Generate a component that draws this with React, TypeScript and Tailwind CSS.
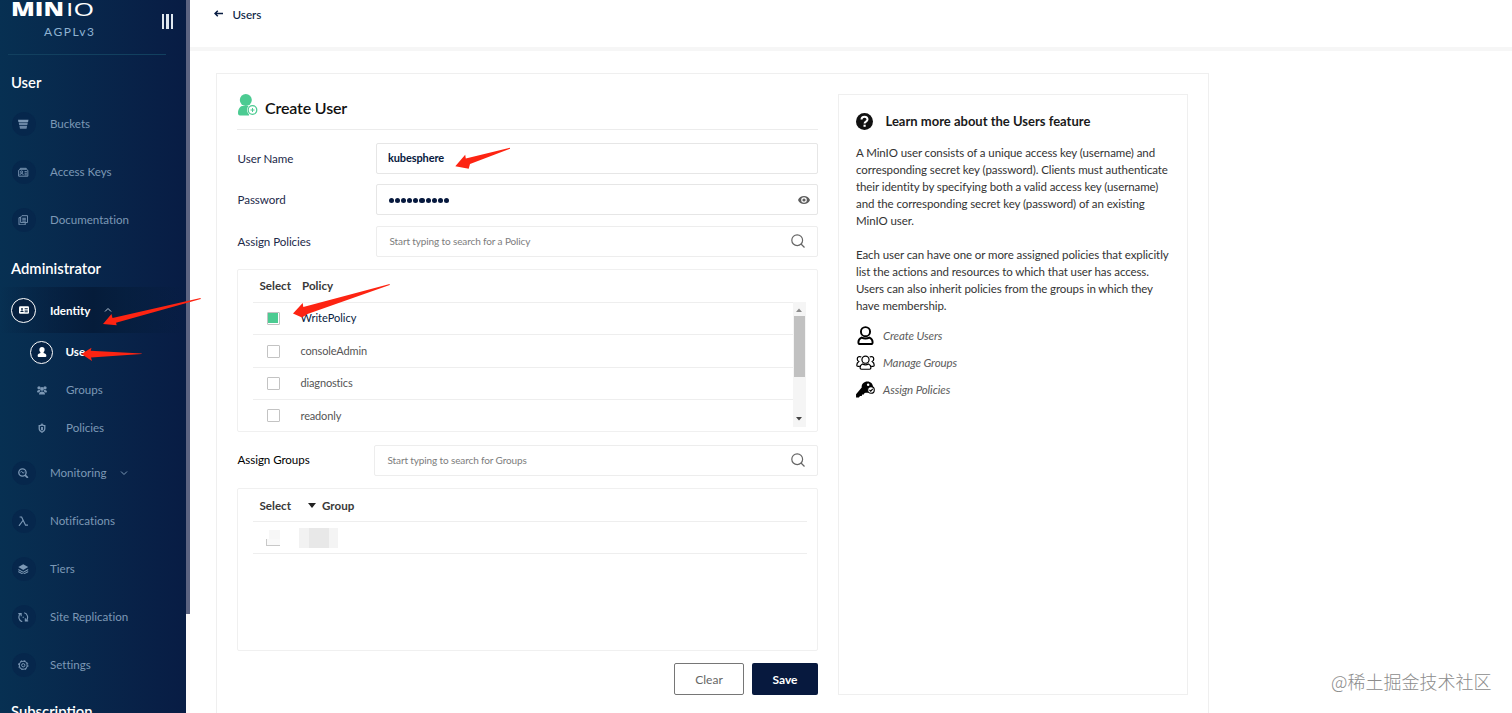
import type { ReactNode } from "react";

const icons: Record<string, ReactNode> = {
  buckets: (
    <>
      <path d="M0 1h16l-.6 3.400H.6z" />
      <path d="M1.100 5.500h13.800l-.6 3.500H1.700zM2.100 10.300h11.800L13 15H3z" opacity=".85" />
    </>
  ),
  keys: (
    <g fill="none" stroke="currentColor" strokeWidth="1.400">
      <path d="M3.500 3.500V2h9v1.500M1 14V5l2-1.500h10L15 5v9z" />
      <circle cx="5.500" cy="7.500" r="1.600" />
      <path d="M3 12c0-3 5-3 5 0M10 7h3.500M10 9.500h3.500M10 12h3.500" />
    </g>
  ),
  docs: (
    <g fill="none" stroke="currentColor" strokeWidth="1.400">
      <path d="M6 1h8.500v10.500H4V3zM4 4H1.500v11H11v-3.500M6.500 5h5.500M6.500 7.200h5.500M6.500 9.400h5.500" />
    </g>
  ),
  identity: (
    <>
      <rect x="0" y="2" width="16" height="12" rx="2" />
      <g fill="#06203f">
        <circle cx="4.800" cy="6.300" r="1.500" />
        <path d="M2 11.300c0-3.500 5.600-3.500 5.600 0zM9 5h5v1.400H9zM9 7.500h5v1.400H9zM9 10h5v1.400H9z" />
      </g>
    </>
  ),
  user: (
    <>
      <circle cx="8" cy="4.300" r="4.200" />
      <path d="M5.500 7.500h5v2.200c3 .6 4.500 2 4.500 4.500 0 1-.6 1.600-1.600 1.600H2.600c-1 0-1.600-.6-1.600-1.600 0-2.500 1.500-3.900 4.500-4.500z" />
    </>
  ),
  groups: (
    <>
      <circle cx="3.200" cy="4.500" r="2.600" />
      <circle cx="12.800" cy="4.500" r="2.600" />
      <circle cx="8" cy="6.200" r="3" />
      <path d="M0 11.500c0-3.500 3-4.500 5-3 0 2-1 3-2 3.500zM16 11.500c0-3.500-3-4.500-5-3 0 2 1 3 2 3.500zM3.200 15c0-6 9.600-6 9.600 0z" />
    </>
  ),
  policies: (
    <>
      <path
        fillRule="evenodd"
        d="M8 0l1.500 2.200C11 3 12.500 3.200 13.500 3.200v6c0 3-2.500 5-5.500 6.600C5 14.200 2.500 12.200 2.500 9.200v-6c1 0 2.500-.2 4-1zM8 4.200L4.600 5.300v4c0 1.800 1.400 3 3.400 4.100 2-1.100 3.400-2.300 3.400-4.100v-4z"
      />
      <path d="M6.500 6.500h3v5h-3z" />
    </>
  ),
  monitoring: (
    <g fill="none" stroke="currentColor" strokeWidth="2">
      <circle cx="6.800" cy="6.800" r="5.600" />
      <path d="M10.800 10.800L15 15" strokeWidth="2.600" />
      <path d="M3.500 6.500l2.200-1.500L7.500 8 10 6" strokeWidth="1.300" />
    </g>
  ),
  lambda: (
    <path d="M2.500 1.500h3L11.500 14h3.700M7.800 6.500L1.500 15" fill="none" stroke="currentColor" strokeWidth="1.800" />
  ),
  tiers: (
    <>
      <path d="M8 .5L15.500 4.700 8 9 .5 4.700z" />
      <path d="M.5 7.500L8 11.700l7.500-4.200v1.900L8 13.400.5 9.400zM.5 10.800L8 14.800l7.500-4v1.700L8 16.300.5 12.500z" />
    </>
  ),
  replication: (
    <g fill="none" stroke="currentColor" strokeWidth="1.700">
      <path d="M6.500 14.800A7 7 0 0 1 3.500 3M4.800 6.500V2.500H.5M9.500 1.200a7 7 0 0 1 3 11.800M11.200 9.500v4h4.300" />
      <path d="M7 8h2" />
    </g>
  ),
  settings: (
    <g fill="none" stroke="currentColor">
      <circle cx="8" cy="8" r="6" strokeWidth="1.600" />
      <circle cx="8" cy="8" r="7.200" strokeWidth="1.400" strokeDasharray="2.800 2.850" />
      <circle cx="8" cy="8" r="2.500" strokeWidth="1.500" />
    </g>
  ),
};

function Icon({ name, className }: { name: string; className: string }) {
  return (
    <svg viewBox="0 0 16 16" fill="currentColor" className={className}>
      {icons[name]}
    </svg>
  );
}

function NavItem({ icon, label, arrow }: { icon: string; label: string; arrow?: boolean }) {
  return (
    <div className="flex h-12 items-center pl-[11.500px] text-[#7c98b5]">
      <div className="flex size-6 items-center justify-center rounded-full bg-[#06274c]">
        <Icon name={icon} className="size-[10.500px]" />
      </div>
      <span className="ml-[14.500px] text-[11.600px] tracking-[-0.020px]">{label}</span>
      {arrow && (
        <svg viewBox="0 0 8 8" className="ml-[14px] size-[8px]" fill="none" stroke="currentColor">
          <path d="M1 2.500l3 3 3-3" />
        </svg>
      )}
    </div>
  );
}

function SubItem({ icon, label }: { icon: string; label: string }) {
  return (
    <div className="flex h-[38px] items-center pl-[30px] text-[#7c98b5]">
      <div className="flex w-[23px] justify-center">
        <Icon name={icon} className="size-[10px]" />
      </div>
      <span className="ml-[13px] text-[11.600px] tracking-[-0.020px]">{label}</span>
    </div>
  );
}

function Sidebar() {
  return (
    <aside className="flex w-[190px] shrink-0">
      <div className="w-[186px] bg-linear-to-r from-[#073052] to-[#081c44]">
        <div className="ml-[8px] flex h-[55px] w-[158px] justify-between border-b border-[#12405f]">
          <svg width="90" height="40" viewBox="0 0 90 40" fill="#fff" className="font-['Open_Sans',sans-serif]">
            <text x="3" y="15.800" fontSize="19" fontWeight="800" textLength="53" lengthAdjust="spacingAndGlyphs">
              MIN
            </text>
            <text x="58" y="15.800" fontSize="19" fontWeight="400" textLength="28" lengthAdjust="spacingAndGlyphs">
              IO
            </text>
            <text x="36" y="35.500" fontSize="12" fill="#8fb3d2" textLength="50" className="font-[Lato,sans-serif]">
              AGPLv3
            </text>
          </svg>
          <div className="mt-[14px] mr-[-7px] flex h-[15px] gap-[2px]">
            <i className="w-[2.400px] bg-[#dfe7ef]" />
            <i className="w-[2.400px] bg-[#dfe7ef]" />
            <i className="w-[2.400px] bg-[#dfe7ef]" />
          </div>
        </div>

        <div className="mt-[9px] flex h-[36px] items-center pl-[11px] text-[14.800px] font-semibold text-white">User</div>
        <NavItem icon="buckets" label="Buckets" />
        <NavItem icon="keys" label="Access Keys" />
        <NavItem icon="docs" label="Documentation" />

        <div className="flex h-[43px] items-center pt-[5px] pl-[11px] text-[14.800px] font-semibold text-white">
          Administrator
        </div>
        <div className="flex h-[46px] items-center bg-linear-to-r from-transparent via-[#051c3a] via-50% to-transparent pl-[11px] text-white">
          <div className="flex size-[25px] items-center justify-center rounded-full border border-white bg-[#06203f]">
            <Icon name="identity" className="size-[10px]" />
          </div>
          <span className="mt-px ml-[14px] text-[11.600px] font-bold">Identity</span>
          <svg viewBox="0 0 8 8" className="ml-[14px] size-[8px]" fill="none" stroke="#b7c6d6">
            <path d="M1 5.500l3-3 3 3" />
          </svg>
        </div>
        <div className="flex h-[38px] items-center pl-[30px] text-white">
          <div className="flex size-[23px] items-center justify-center rounded-full border border-white bg-[#062345]">
            <Icon name="user" className="size-[10px]" />
          </div>
          <span className="ml-[12.500px] text-[11.600px] font-bold">
            Use<span className="text-transparent">rs</span>
          </span>
        </div>
        <SubItem icon="groups" label="Groups" />
        <SubItem icon="policies" label="Policies" />
        <div className="h-[2px]" />
        <NavItem icon="monitoring" label="Monitoring" arrow />
        <NavItem icon="lambda" label="Notifications" />
        <NavItem icon="tiers" label="Tiers" />
        <NavItem icon="replication" label="Site Replication" />
        <NavItem icon="settings" label="Settings" />
        <div className="flex h-[44px] items-center pt-px pl-[11px] text-[14.800px] font-semibold text-white">
          Subscription
        </div>
      </div>
      <div className="w-[4px] bg-[#fbf8f9]">
        <div className="h-[614px] bg-[#5c6381]" />
      </div>
    </aside>
  );
}

function SearchIcon() {
  return (
    <svg viewBox="0 0 14 14" className="size-[14px]" fill="none" stroke="#666" strokeWidth="1.200">
      <circle cx="6.200" cy="6.200" r="5.400" />
      <path d="M10 10l3.500 3.500" />
    </svg>
  );
}

function SearchBox({ placeholder, className }: { placeholder: string; className: string }) {
  return (
    <div
      className={`flex items-center justify-between rounded-[2px] border border-[#ededed] pr-[12px] pb-px pl-[12.500px] text-[10px] tracking-[-0.120px] text-[#7d7d7d] ${className}`}
    >
      <span>{placeholder}</span>
      <SearchIcon />
    </div>
  );
}

const policies = ["WritePolicy", "consoleAdmin", "diagnostics", "readonly"];

function PolicyTable() {
  return (
    <div className="mt-[12px] h-[163px] overflow-hidden rounded-[2px] border border-[#f0f0f0] pr-[11.500px] pl-[15px]">
      <div className="flex h-[32px] items-center pl-[6.500px] text-[11.600px] font-bold text-[#393939]">
        <span className="w-[42.500px]">Select</span>
        <span>Policy</span>
      </div>
      <div className="flex">
        <div className="flex-1">
          {policies.map((policy, index) => (
            <div
              key={policy}
              className={`flex h-[32.400px] items-center border-t border-[#eeeeee] pl-[13.500px] text-[11px] ${
                index === 0 ? "pb-px text-[#081c42]" : "tracking-[-0.150px] text-[#555]"
              }`}
            >
              <div className="mr-[21px] flex size-[13px] items-center justify-center rounded-[1px] border border-[#c3c3c3]">
                {index === 0 && <div className="size-[10px] bg-[#4ccb92]" />}
              </div>
              {policy}
            </div>
          ))}
        </div>
        <div className="flex h-[125px] w-[13px] flex-col items-center justify-between bg-[#f5f5f5]">
          <svg viewBox="0 0 6 4" className="mt-[6px] h-[4px] w-[6px]" fill="#8d8d8d">
            <path d="M0 4l3-3.500L6 4z" />
          </svg>
          <div className="mt-[4px] mb-auto h-[61px] w-[11px] bg-[#c1c1c1]" />
          <svg viewBox="0 0 6 4" className="mb-[6px] h-[4px] w-[6px]" fill="#444">
            <path d="M0 0l3 3.500L6 0z" />
          </svg>
        </div>
      </div>
    </div>
  );
}

function GroupTable() {
  return (
    <div className="mt-[12px] h-[163px] rounded-[2px] border border-[#f0f0f0] pr-[10px] pl-[15px]">
      <div className="flex h-[33px] items-center border-b border-[#eeeeee] pt-px pl-[6.500px] text-[11.600px] font-bold text-[#393939]">
        <span className="w-[48.500px]">Select</span>
        <svg viewBox="0 0 8 5" className="h-[5px] w-[8px]" fill="#222">
          <path d="M0 0h8L4 5z" />
        </svg>
        <span className="ml-[6px]">Group</span>
      </div>
      <div className="flex h-[32px] items-center border-b border-[#eeeeee] pl-[13px]">
        <div className="flex h-[16px] w-[14px] flex-col">
          <div className="ml-[3px] h-[9px] bg-[#f7f7f7]" />
          <div className="h-[7px] border-b border-l border-[#c8c8c8] bg-[#f9f9f9]" />
        </div>
        <div className="ml-[19px] flex h-[20px] w-[39px]">
          <div className="w-[10px] bg-[#f2f2f2]" />
          <div className="w-[20px] bg-[#e8e8e8]" />
          <div className="w-[9px] bg-[#f4f4f4]" />
        </div>
      </div>
    </div>
  );
}

function CreateUserForm() {
  return (
    <div className="w-[581px] text-[11.600px] text-[#1d2a4a]">
      <div className="flex h-[36px] border-b border-[#ececec]">
        <svg viewBox="0 0 20 22" className="ml-px h-[22px] w-[20px]" fill="#4ccb92">
          <circle cx="7.800" cy="6" r="6" />
          <path d="M4 12h8v2l-1 7.500H2c-1.500 0-2-1-2-2.500C0 15 2 12.500 4 12z" />
          <circle cx="14.500" cy="16" r="5.500" fill="#fff" />
          <circle cx="14.500" cy="16" r="4.300" fill="none" stroke="#4ccb92" strokeWidth="1.200" />
          <path d="M14 14h1v1.500h1.500v1H15V18h-1v-1.500h-1.500v-1H14z" />
        </svg>
        <h1 className="mt-[3px] ml-[7px] text-[16px] leading-[22px] font-semibold tracking-[-0.150px] text-[#111]">
          Create User
        </h1>
      </div>

      <div className="mt-[13px] flex h-[31px] items-center">
        <label className="w-[139px] pl-[0.500px] tracking-[-0.070px]">User Name</label>
        <div className="flex h-full flex-1 items-center rounded-[2px] border border-[#e6e6e6] pl-[11px] text-[11px] font-bold tracking-[-0.120px] text-[#07193e]">
          kubesphere
        </div>
      </div>
      <div className="mt-[10px] flex h-[31px] items-center">
        <label className="w-[139px] pl-[0.500px] tracking-[-0.070px]">Password</label>
        <div className="flex h-full flex-1 items-center justify-between rounded-[2px] border border-[#e6e6e6] pr-[7px] pl-[11.500px]">
          <div className="mt-[2px] flex gap-[1px]">
            {Array.from({ length: 10 }, (_, i) => (
              <i key={i} className="size-[5.200px] rounded-full bg-[#07193e]" />
            ))}
          </div>
          <svg viewBox="0 0 12 8" className="h-[8px] w-[12px]" fill="#5e5e5e">
            <path
              fillRule="evenodd"
              d="M6 0c2.700 0 5 1.600 6 4-1 2.400-3.300 4-6 4S1 6.400 0 4c1-2.400 3.300-4 6-4zm0 1.200a2.800 2.800 0 1 0 0 5.600 2.800 2.800 0 0 0 0-5.600z"
            />
            <circle cx="6" cy="4" r="1.600" />
          </svg>
        </div>
      </div>
      <div className="mt-[11px] flex h-[31px] items-center">
        <label className="w-[139px] pl-[0.500px] tracking-[-0.070px]">Assign Policies</label>
        <SearchBox placeholder="Start typing to search for a Policy" className="h-full flex-1" />
      </div>

      <PolicyTable />

      <div className="mt-[13px] flex h-[31px] items-center">
        <label className="w-[137px] pb-px pl-[0.500px] tracking-[-0.070px] text-black">Assign Groups</label>
        <SearchBox placeholder="Start typing to search for Groups" className="h-full flex-1" />
      </div>

      <GroupTable />

      <div className="mt-[12px] flex h-[32px] justify-end gap-[8px]">
        <button className="w-[70px] rounded-[2px] border border-[#767676] pt-px text-[12px] text-[#666]">Clear</button>
        <button className="w-[66px] rounded-[2px] bg-[#07193e] pt-px text-[12px] font-bold text-white">Save</button>
      </div>
    </div>
  );
}

function HelpPanel() {
  return (
    <div className="h-[601px] w-[350px] border border-[#efefef] pt-[17px] pl-[17px]">
      <div className="flex h-[19px] items-center">
        <svg viewBox="0 0 17 17" className="size-[17px]">
          <circle cx="8.500" cy="8.500" r="8.500" fill="#111" />
          <path d="M5.500 6.600c0-3.800 6-3.800 6 0 0 2.200-2.900 1.900-2.900 4" fill="none" stroke="#fff" strokeWidth="2" />
          <rect x="7.500" y="11.700" width="2.200" height="2.100" fill="#fff" />
        </svg>
        <h2 className="ml-[12.500px] text-[13px] font-bold text-[#1a1a1a]">Learn more about the Users feature</h2>
      </div>
      <div className="mt-[13px] text-[11.500px] leading-[17px] tracking-[-0.085px] whitespace-nowrap text-[#333]">
        <p>
          A MinIO user consists of a unique access key (username) and
          <br />
          corresponding secret key (password). Clients must authenticate
          <br />
          their identity by specifying both a valid access key (username)
          <br />
          and the corresponding secret key (password) of an existing
          <br />
          MinIO user.
        </p>
        <p className="mt-[17px]">
          Each user can have one or more assigned policies that explicitly
          <br />
          list the actions and resources to which that user has access.
          <br />
          Users can also inherit policies from the groups in which they
          <br />
          have membership.
        </p>
      </div>
      <div className="mt-[8px] text-[11.500px] tracking-[-0.110px] text-[#5c5c5c] italic">
        <div className="flex h-[27px] items-center">
          <svg viewBox="0 0 20 20" className="size-[19px]" fill="none" stroke="#000" strokeWidth="2">
            <circle cx="10" cy="6" r="4.800" />
            <path d="M5.800 12.200c-2.300 1-3.300 2.700-3.300 4.800 0 1.400.5 2 2 2h11c1.500 0 2-.6 2-2 0-2.100-1-3.800-3.300-4.800-2.600 1.200-5.800 1.200-8.400 0z" />
          </svg>
          <span className="ml-[8px]">Create Users</span>
        </div>
        <div className="flex h-[27px] items-center">
          <svg viewBox="0 0 20 16" className="h-[15px] w-[19px]" fill="none" stroke="#000" strokeWidth="1.300">
            <circle cx="10" cy="5" r="3.800" />
            <path d="M6.700 9.600C5 10.500 4.200 12 4.200 13.700c0 1 .5 1.500 1.500 1.500h8.600c1 0 1.500-.5 1.500-1.500 0-1.700-.8-3.200-2.500-4.100-2 1-4.600 1-6.600 0z" />
            <path d="M5.500 2.200C3.500.8 1.200 2.200 1.200 4.300c0 1.300.7 2.200 1.600 2.700C1.400 8 .7 9.300.7 10.800c0 .9.400 1.300 1.400 1.300H4M14.500 2.200c2-1.400 4.300 0 4.300 2.100 0 1.300-.7 2.200-1.600 2.700 1.400 1 2.100 2.300 2.100 3.800 0 .9-.4 1.300-1.400 1.300H16" />
          </svg>
          <span className="ml-[8px]">Manage Groups</span>
        </div>
        <div className="flex h-[27px] items-center">
          <svg viewBox="0 0 20 18" className="h-[17px] w-[19px]">
            <path d="M6 7C5.500 3 8.500.5 12 .5c3.500 0 6 2.500 6 6 0 4-3 6.500-7.500 6l-1.500.3-.8 1.400-1.700.2-.5 1.400-1.800.2L3 17.500H0V14z" />
            <circle cx="12.800" cy="4" r="1.300" fill="#fff" />
            <circle cx="15.800" cy="9.500" r="3.500" fill="#fff" stroke="#000" strokeWidth="1.200" />
            <path d="M14.200 9.500l1.300 1.300 2.200-2.500" fill="none" stroke="#000" strokeWidth="1.200" />
          </svg>
          <span className="ml-[8px]">Assign Policies</span>
        </div>
      </div>
    </div>
  );
}

export default function App() {
  return (
    <div className="relative flex h-screen w-full overflow-hidden bg-white font-[Lato,sans-serif]">
      <Sidebar />
      <main className="flex-1">
        <header className="flex h-[51px] border-b-4 border-[#f6f6f6] pl-[24px] text-[#081c42]">
          <svg viewBox="0 0 9 7" className="mt-[10px] h-[7px] w-[9px]" fill="none" stroke="currentColor" strokeWidth="1.500">
            <path d="M9 3.500H1M3.800.7L1 3.500l2.800 2.800" />
          </svg>
          <span className="mt-[6px] ml-[9.500px] text-[11.700px] leading-[16px] font-medium">Users</span>
        </header>
        <section className="mt-[22px] ml-[26px] flex h-[700px] w-[993px] gap-[20px] border border-[#efefef] p-[20px]">
          <CreateUserForm />
          <HelpPanel />
        </section>
      </main>

      {/* Red pointers */}
      <svg viewBox="0 0 1512 713" className="absolute top-0 left-0 h-[713px] w-[1512px]" fill="#fd2412">
        <path d="M103 324l8.500-10 1 4 88-20 .3 1L116 322.700l.7 2.600z" />
        <path d="M81.500 354l10-6.300-.8 3 51 2.800v.6L91 357.600l1 3.400z" />
        <path d="M455.300 166.200l9.900-11.400.6 3.800L510 147.700v1L470 164l-1.300 4.700z" />
        <path d="M293 313.600l9.700-10.600.6 4L389.700 284v1L307.500 314l-5.500 3.500z" />
      </svg>

      <div className="absolute top-[668px] left-[1331px] font-['Noto_Sans_CJK_SC',sans-serif] text-[18px] leading-[27px] font-light whitespace-nowrap text-[#8c8c8c]">
        @稀土掘金技术社区
      </div>
    </div>
  );
}
